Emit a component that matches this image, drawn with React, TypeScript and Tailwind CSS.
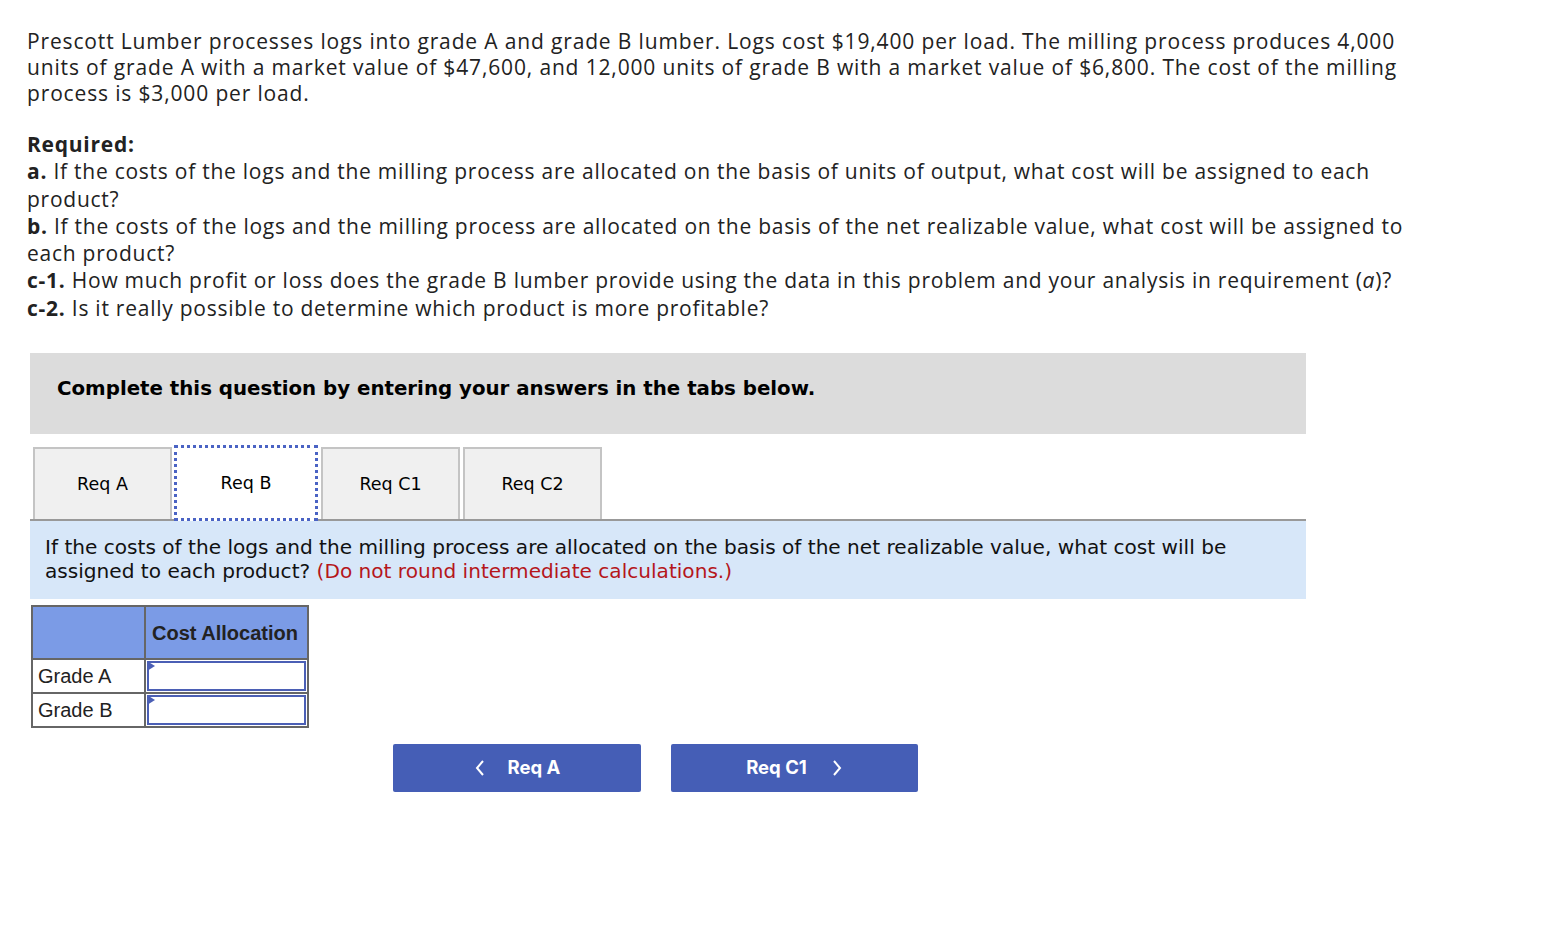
import React from 'react';

const tabs = ['Req A', 'Req B', 'Req C1', 'Req C2'];

const App = () => {
  return (
    <div className="min-h-screen bg-white pl-[27px] pt-[28px]">
      <div className="whitespace-nowrap font-['Open_Sans',sans-serif] text-[21px] tracking-[0.85px] text-[#222] leading-[26px]">
        <p>
          Prescott Lumber processes logs into grade A and grade B lumber. Logs cost $19,400 per load. The milling process produces 4,000
          <br />
          units of grade A with a market value of $47,600, and 12,000 units of grade B with a market value of $6,800. The cost of the milling
          <br />
          process is $3,000 per load.
        </p>
        <div className="mt-[25px] leading-[27.3px] tracking-[0.75px]">
          <p className="font-bold">Required:</p>
          <p>
            <b>a.</b> If the costs of the logs and the milling process are allocated on the basis of units of output, what cost will be assigned to each
            <br />
            product?
          </p>
          <p>
            <b>b.</b> If the costs of the logs and the milling process are allocated on the basis of the net realizable value, what cost will be assigned to
            <br />
            each product?
          </p>
          <p>
            <b>c-1.</b> How much profit or loss does the grade B lumber provide using the data in this problem and your analysis in requirement (<i>a</i>)?
          </p>
          <p>
            <b>c-2.</b> Is it really possible to determine which product is more profitable?
          </p>
        </div>
      </div>

      <div className="ml-[3px] mt-[31px] w-[1276px] font-['DejaVu_Sans',Verdana,sans-serif]">
        <div className="h-[81px] bg-[#dcdcdc] pl-[27px] pt-[21px] text-[19.8px] font-bold text-black">
          Complete this question by entering your answers in the tabs below.
        </div>

        <div className="mt-[11px] flex items-end border-b-2 border-[#999] pl-[3px]">
          {tabs.map((t, i) => (
            <div
              key={t}
              className={
                t === 'Req B'
                  ? 'relative z-10 -mb-[2px] ml-[2px] flex h-[76px] w-[144px] items-center justify-center border-[3px] border-dotted border-[#4a63c4] bg-white text-[17.5px] text-black'
                  : (i === 0 ? '' : 'ml-[3px] ') +
                    'flex h-[72px] w-[139px] items-center justify-center border-2 border-b-0 border-[#c4c4c4] bg-[#f0f0f0] text-[17.5px] text-black'
              }
            >
              {t}
            </div>
          ))}
        </div>

        <div className="h-[78px] whitespace-nowrap bg-[#d7e7f9] px-[15px] pt-[14px] text-[20.1px] leading-[24px] text-[#111]">
          If the costs of the logs and the milling process are allocated on the basis of the net realizable value, what cost will be
          <br />
          assigned to each product? <span className="text-[#b5161b]">(Do not round intermediate calculations.)</span>
        </div>
      </div>

      <table className="ml-[4px] mt-[6px] border-collapse font-['Liberation_Sans',Arial,sans-serif] text-[20px] text-[#222]">
        <tbody>
          <tr className="h-[53px] bg-[#7b9be6]">
            <th className="w-[113px] border-2 border-[#666]"></th>
            <th className="w-[163px] border-2 border-[#666] px-[6px] text-left font-bold">Cost Allocation</th>
          </tr>
          {['Grade A', 'Grade B'].map((g) => (
            <tr key={g} className="h-[34px]">
              <td className="border-2 border-[#666] px-[5px]">{g}</td>
              <td className="relative border-2 border-[#666] p-0">
                <div className="absolute inset-[1px] border-2 border-[#4b5fb5] bg-white" />
                <div className="absolute left-[1px] top-[1px] h-0 w-0 border-y-[5px] border-l-[8px] border-y-transparent border-l-[#4b5fb5]" />
              </td>
            </tr>
          ))}
        </tbody>
      </table>

      <div className="ml-[366px] mt-[16px] flex gap-[30px] font-['Inter',sans-serif] text-[18.5px] font-bold text-white">
        <button className="flex h-[48px] w-[248px] items-center justify-center gap-[22px] rounded-[2px] bg-[#455eb6]">
          <svg width="12" height="18" viewBox="0 0 12 18" fill="none" stroke="white" strokeWidth="2">
            <path d="M9 2 L3 9 L9 16" />
          </svg>
          <span>Req A</span>
        </button>
        <button className="flex h-[48px] w-[247px] items-center justify-center gap-[24px] rounded-[2px] bg-[#455eb6]">
          <span>Req C1</span>
          <svg width="12" height="18" viewBox="0 0 12 18" fill="none" stroke="white" strokeWidth="2">
            <path d="M3 2 L9 9 L3 16" />
          </svg>
        </button>
      </div>
    </div>
  );
};

export default App;
